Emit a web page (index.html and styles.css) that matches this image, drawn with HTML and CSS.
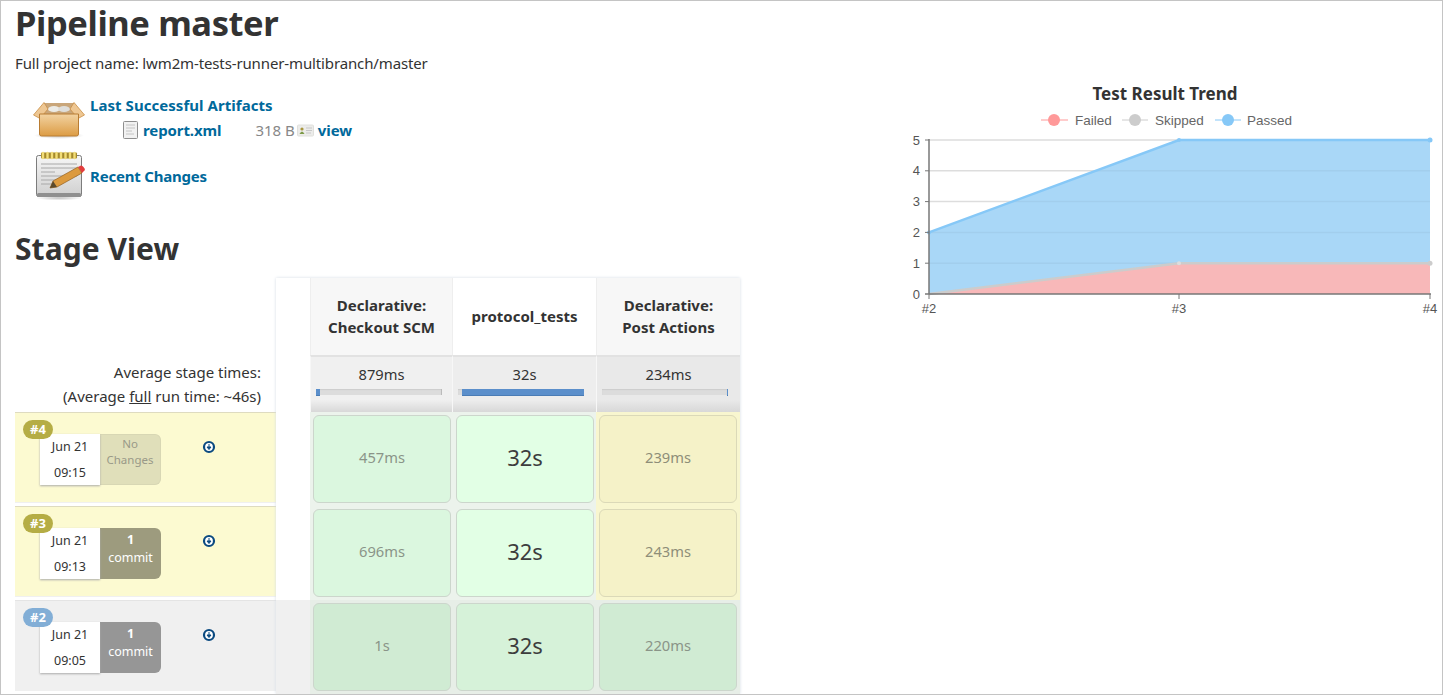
FILE: index.html
```html
<!DOCTYPE html>
<html lang="en">
<head>
    <meta charset="UTF-8">
    <title>Pipeline master</title>
    <link rel="stylesheet" href="styles.css">
</head>
<body>
<div class="frame">
    <div class="main">
        <h1>Pipeline master</h1>
        <p class="full-name">Full project name: lwm2m-tests-runner-multibranch/master</p>

        <div class="task">
            <svg class="task-icon" width="56" height="42" viewBox="0 0 56 42">
                <defs>
                    <linearGradient id="box" x1="0" y1="0" x2="0" y2="1">
                        <stop offset="0" stop-color="#f2d3a2"/>
                        <stop offset="1" stop-color="#dc9c44"/>
                    </linearGradient>
                    <radialGradient id="ground">
                        <stop offset="0" stop-color="#999" stop-opacity=".6"/>
                        <stop offset="1" stop-color="#999" stop-opacity="0"/>
                    </radialGradient>
                </defs>
                <ellipse cx="26" cy="38.500" rx="25" ry="3.500" fill="url(#ground)"/>
                <path d="M11 6 L41 6 L45 18 L7 18 Z" fill="#c9a67a"/>
                <ellipse cx="21" cy="12" rx="6" ry="3" fill="#ecebe6"/>
                <ellipse cx="31" cy="12" rx="6" ry="3" fill="#dfdeda"/>
                <path d="M11 5.500 L.5 18 L7 21.500 L15 12 Z" fill="#eec793" stroke="#c98e45" stroke-width=".8"/>
                <path d="M41 5.500 L51.500 18 L45 21.500 L37 12 Z" fill="#eec793" stroke="#c98e45" stroke-width=".8"/>
                <path d="M6.500 17 L45.500 17 L45.500 37 Q45.500 39 43.500 39 L8.500 39 Q6.500 39 6.500 37 Z" fill="url(#box)" stroke="#b97c32"/>
            </svg>
            <div class="task-body">
                <a class="task-link" href="#">Last Successful Artifacts</a>
                <div class="artifact">
                    <svg class="doc-icon" width="15" height="18" viewBox="0 0 15 18">
                        <rect x=".5" y=".5" width="14" height="17" rx="1" fill="#f1f1f1" stroke="#8e8e8e"/>
                        <path d="M3 4h9M3 7h9M3 10h6M3 13h8" stroke="#c4c4c4"/>
                    </svg>
                    <a class="artifact-name" href="#">report.xml</a>
                    <span class="artifact-size">318 B</span>
                    <svg class="view-icon" width="17" height="13" viewBox="0 0 17 13">
                        <rect x=".5" y="1" width="16" height="11" rx="1" fill="#ececea" stroke="#e0e0dc"/>
                        <circle cx="5" cy="5" r="1.600" fill="#a8963e"/>
                        <path d="M2.500 10 Q5 5 7.500 10 Z" fill="#7d9a48"/>
                        <path d="M9 4h6M9 6.500h6M9 9h5" stroke="#c8c8c8"/>
                    </svg>
                    <a class="artifact-name" href="#">view</a>
                </div>
            </div>
        </div>

        <div class="task task-changes">
            <svg class="task-icon" width="56" height="50" viewBox="0 0 56 50">
                <defs>
                    <linearGradient id="pad" x1="0" y1="0" x2="0" y2="1">
                        <stop offset="0" stop-color="#f6f6f6"/>
                        <stop offset="1" stop-color="#cfcfcf"/>
                    </linearGradient>
                </defs>
                <ellipse cx="26" cy="47" rx="23" ry="2.500" fill="url(#ground)"/>
                <rect x="3.500" y="4.500" width="45" height="41" rx="2" fill="url(#pad)" stroke="#7c7c7c"/>
                <rect x="4" y="42" width="44" height="4" rx="1.500" fill="#8f8f8f"/>
                <rect x="8" y="1.500" width="36" height="6" rx="1" fill="#a58a2b"/>
                <path d="M10 2v5M14.500 2v5M19 2v5M23.500 2v5M28 2v5M32.500 2v5M37 2v5M41.500 2v5" stroke="#f2dd78" stroke-width="2.400" stroke-linecap="round"/>
                <path d="M8 13h36M8 17h36M8 21h14M8 25h36M8 29h22M8 33h12" stroke="#a8a8a8"/>
                <path d="M17 37 L20 30 L45 16 L49 22 L24 36 Z" fill="#dc9a3e" stroke="#94601f" stroke-width=".7"/>
                <path d="M17 37 L20 30 L24 36 Z" fill="#5b4a2d"/>
                <path d="M45 16 L48 14.500 Q51 15 52 19 L49 22 Z" fill="#e33e3e"/>
            </svg>
            <a class="task-link" href="#">Recent Changes</a>
        </div>

        <h2>Stage View</h2>

        <div class="stage-view">
            <div class="avg-label">
                <div>Average stage times:</div>
                <div>(Average <u>full</u> run time: ~46s)</div>
            </div>

            <div class="blank-top"></div>
            <div class="stage-head alt">Declarative:<br>Checkout SCM</div>
            <div class="stage-head">protocol_tests</div>
            <div class="stage-head alt">Declarative:<br>Post Actions</div>

            <div class="avg avg-light">879ms
                <div class="bar"><div class="bar-fill" style="left:0;width:4px"></div></div>
            </div>
            <div class="avg">32s
                <div class="bar"><div class="bar-fill" style="left:4px;width:122px"></div></div>
            </div>
            <div class="avg avg-dark">234ms
                <div class="bar"><div class="bar-fill" style="left:125px;width:1px"></div></div>
            </div>

            <div class="run run-yellow">
                <span class="badge">#4</span>
                <div class="run-date"><span>Jun 21</span><span>09:15</span></div>
                <div class="run-changes none">No<br>Changes</div>
                <svg class="run-dl" width="14" height="14" viewBox="0 0 14 14"><circle cx="7" cy="7" r="5" fill="#fff" stroke="#0b4a80" stroke-width="2.200"/><path d="M7 4v3M5 7 L7 9.500 L9 7 Z" fill="#0b4a80" stroke="#0b4a80"/></svg>
            </div>
            <div class="blank"></div>
            <div class="col-wrap col-1 green"><div class="cell c-green dim">457ms</div></div>
            <div class="col-wrap col-2 green"><div class="cell c-bright big">32s</div></div>
            <div class="col-wrap col-3 yellow"><div class="cell c-yellow dim">239ms</div></div>

            <div class="run run-yellow">
                <span class="badge">#3</span>
                <div class="run-date"><span>Jun 21</span><span>09:13</span></div>
                <div class="run-changes olive"><b>1</b><br>commit</div>
                <svg class="run-dl" width="14" height="14" viewBox="0 0 14 14"><circle cx="7" cy="7" r="5" fill="#fff" stroke="#0b4a80" stroke-width="2.200"/><path d="M7 4v3M5 7 L7 9.500 L9 7 Z" fill="#0b4a80" stroke="#0b4a80"/></svg>
            </div>
            <div class="blank"></div>
            <div class="col-wrap col-1 green"><div class="cell c-green dim">696ms</div></div>
            <div class="col-wrap col-2 green"><div class="cell c-bright big">32s</div></div>
            <div class="col-wrap col-3 yellow"><div class="cell c-yellow dim">243ms</div></div>

            <div class="run run-grey">
                <span class="badge blue">#2</span>
                <div class="run-date"><span>Jun 21</span><span>09:05</span></div>
                <div class="run-changes grey"><b>1</b><br>commit</div>
                <svg class="run-dl" width="14" height="14" viewBox="0 0 14 14"><circle cx="7" cy="7" r="5" fill="#fff" stroke="#0b4a80" stroke-width="2.200"/><path d="M7 4v3M5 7 L7 9.500 L9 7 Z" fill="#0b4a80" stroke="#0b4a80"/></svg>
            </div>
            <div class="blank grey"></div>
            <div class="col-wrap col-1 dark"><div class="cell c-dark dim">1s</div></div>
            <div class="col-wrap col-2 dark"><div class="cell c-mid big">32s</div></div>
            <div class="col-wrap col-3 dark"><div class="cell c-dark dim">220ms</div></div>

            <div class="table-outline"></div>
        </div>
    </div>

    <div class="trend">
        <svg width="552" height="240" viewBox="0 0 552 240">
            <text class="chart-title" x="275" y="20" text-anchor="middle">Test Result Trend</text>

            <path class="legend-line" d="M151 40h27" stroke="#f99"/>
            <circle cx="164" cy="40" r="6" fill="#f99"/>
            <text class="legend" x="185" y="44.500">Failed</text>
            <path class="legend-line" d="M232 40h26" stroke="#ccc"/>
            <circle cx="245" cy="40" r="6" fill="#ccc"/>
            <text class="legend" x="265" y="44.500">Skipped</text>
            <path class="legend-line" d="M325 40h26" stroke="#86c8f7"/>
            <circle cx="338" cy="40" r="6" fill="#86c8f7"/>
            <text class="legend" x="357" y="44.500">Passed</text>

            <path d="M39 60H540M39 90.800H540M39 121.600H540M39 152.400H540M39 183.200H540" stroke="#ddd" stroke-width="1.500"/>

            <path d="M39 152.400 L289 60 L540 60 L540 183.200 L289 183.200 L39 214 Z" fill="#a9d7f7"/>
            <path d="M39 214 L289 183.200 L540 183.200 L540 214 Z" fill="#f8b8b9"/>
            <path d="M205.700 90.800H540M122 121.600H540M39 152.400H540M39 183.200H540" stroke="#000" stroke-opacity=".04" stroke-width="1.500"/>

            <path d="M39 214 L289 183.200 L540 183.200" fill="none" stroke="#ccc" stroke-width="2.500"/>
            <path d="M39 152.400 L289 60 L540 60" fill="none" stroke="#86c8f7" stroke-width="2.500"/>
            <circle cx="289" cy="60" r="2" fill="#86c8f7"/>
            <circle cx="540" cy="60" r="2.500" fill="#86c8f7"/>
            <circle cx="39" cy="152.400" r="2" fill="#86c8f7"/>
            <circle cx="289" cy="183.200" r="2" fill="#ddd"/>
            <circle cx="540" cy="183.200" r="2.500" fill="#ccc"/>

            <path d="M39 59V214" stroke="#777" stroke-width="1.500"/>
            <path d="M35 214H541" stroke="#777" stroke-width="1.500"/>
            <path d="M35 60h4M35 90.800h4M35 121.600h4M35 152.400h4M35 183.200h4M39 214v5M289 214v5M540 214v5" stroke="#777"/>

            <g class="tick">
                <text x="30" y="64.500" text-anchor="end">5</text>
                <text x="30" y="95.300" text-anchor="end">4</text>
                <text x="30" y="126.100" text-anchor="end">3</text>
                <text x="30" y="156.900" text-anchor="end">2</text>
                <text x="30" y="187.700" text-anchor="end">1</text>
                <text x="30" y="218.500" text-anchor="end">0</text>
                <text x="39" y="233" text-anchor="middle">#2</text>
                <text x="289" y="233" text-anchor="middle">#3</text>
                <text x="540" y="233" text-anchor="middle">#4</text>
            </g>
        </svg>
    </div>
</div>
</body>
</html>
```

FILE: styles.css
```css
html, body { margin: 0; padding: 0; background: #fff; }
body { font-family: "Noto Sans", "Open Sans", sans-serif; font-size: 15px; color: #333; }
a { color: #00699b; text-decoration: none; font-weight: bold; }

.frame { width: 1443px; height: 695px; box-sizing: border-box; border: 1px solid #c4c4c4; display: flex; overflow: hidden; }
.main { width: 875px; padding-left: 14px; flex-shrink: 0; }

h1 { margin: 0; font-size: 34.500px; line-height: 44px; font-weight: bold; letter-spacing: -.4px; color: #333; }
.full-name { margin: 8px 0 0; font-size: 15px; line-height: 20px; letter-spacing: -.13px; }

.task { display: flex; margin-top: 24px; margin-left: 18px; }
.task-icon { flex-shrink: 0; }
.task-body { margin-top: -2px; }
.task-link { font-size: 15px; line-height: 20px; letter-spacing: .05px; display: block; margin-left: 1px; }
.artifact { display: flex; align-items: center; margin: 5px 0 0 34px; height: 20px; font-size: 15px; }
.doc-icon { margin-right: 5px; }
.artifact-name { letter-spacing: -.1px; }
.artifact-size { color: #888; margin-left: 34px; margin-right: 2px; }
.view-icon { margin-right: 4px; }
.task-changes { margin-top: 11px; align-items: center; }
.task-changes .task-link { letter-spacing: -.2px; }

h2 { margin: 29px 0 0; font-size: 30px; line-height: 38px; font-weight: bold; letter-spacing: .05px; color: #333; }

.stage-view { position: relative; display: grid; grid-template-columns: 261px 34px 142px 144px 144px; grid-template-rows: 77px 57px 94px 94px 94px; width: 725px; margin-top: 10px; }
.avg-label { grid-column: 1; grid-row: 1 / 3; text-align: right; padding: 0 15px 4px 0; align-self: end; line-height: 24px; font-size: 15px; }
.blank-top { grid-column: 2; grid-row: 1 / 3; background: #fff; }
.table-outline { position: absolute; left: 261px; top: 0; width: 464px; height: 416px; box-shadow: 0 0 3px #d5dde5; pointer-events: none; }

.stage-head { display: flex; align-items: center; justify-content: center; text-align: center; font-weight: bold; font-size: 15px; line-height: 22px; padding-bottom: 1px; box-sizing: border-box; background: #fff; border-left: 1px solid #eee; }
.stage-head.alt { background: #f7f7f7; }

.avg { grid-row: 2; text-align: center; padding-top: 7px; line-height: 20px; font-size: 14.700px; border-top: 2px solid #e2e2e2; border-left: 1px solid #f7f7f7; box-sizing: border-box; background: linear-gradient(to bottom, #ededed 0, #ededed 78%, #d8d8d8 100%); }
.avg-light { background: linear-gradient(to bottom, #f0f0f0 0, #f0f0f0 78%, #d8d8d8 100%); }
.avg-dark { background: linear-gradient(to bottom, #e9e9e9 0, #e9e9e9 78%, #d8d8d8 100%); }
.bar { position: relative; width: 126px; height: 6px; margin: 5px 0 0 5px; box-sizing: border-box; background: #dcdcdc; border-right: 1px solid #bbb; box-shadow: inset 0 1px 1px #ccc; }
.bar-fill { position: absolute; top: 0; height: 6px; background: #5b8fcb; box-shadow: 0 1px 0 #4a7cb5; }

.run { grid-column: 1; position: relative; display: flex; padding: 21px 0 0 25px; height: 91px; box-sizing: border-box; border-top: 1px solid #dedbc0; border-bottom: 1px solid #f0f0f0; }
.run-yellow { background: #fcfad1; }
.run-grey { background: #f0f0f0; border-top-color: #e4e4e4; }
.badge { position: absolute; left: 8px; top: 7px; width: 30px; height: 19px; border-radius: 10px; background: #b5ad45; color: #fff; font-size: 13px; font-weight: bold; line-height: 19px; text-align: center; z-index: 2; }
.badge.blue { background: #82aed6; }
.run-date { width: 60px; height: 51px; background: #fff; box-shadow: 0 1px 2px #aaa; display: flex; flex-direction: column; justify-content: space-between; align-items: center; font-size: 12.500px; line-height: 25px; z-index: 1; }
.run-changes { width: 61px; height: 51px; box-sizing: border-box; border-radius: 0 6px 6px 0; text-align: center; font-size: 12.500px; line-height: 18px; padding-top: 3px; color: #fff; }
.run-changes.none { background: #e0dfba; color: #999988; border: 1px solid #d8d7b4; border-left: 0; font-size: 11.500px; line-height: 16px; padding-top: 1px; }
.run-changes.olive { background: #9d9b7e; }
.run-changes.grey { background: #969696; }
.run-dl { margin: 6px 0 0 41px; }

.blank { grid-column: 2; background: #fff; }
.blank.grey { background: #f0f0f0; }
.col-wrap { padding: 3px 0; box-sizing: border-box; height: 94px; }
.col-1 { padding-left: 3px; padding-right: 1px; }
.col-2 { padding-left: 4px; padding-right: 2px; }
.col-3 { padding-left: 3px; padding-right: 3px; }
.col-wrap.green { background: #ecf3ec; }
.col-wrap.yellow { background: #f8f6cf; }
.col-wrap.dark { background: #e7eee7; }
.cell { height: 88px; box-sizing: border-box; padding-bottom: 5px; border: 1px solid #ccd6cc; border-radius: 6px; display: flex; align-items: center; justify-content: center; }
.cell.dim { font-size: 14.700px; color: #8a9488; }
.cell.big { font-size: 22px; color: #3d3d3d; }
.c-green { background: #dbf7df; }
.c-bright { background: #e2ffe5; }
.c-yellow { background: #f5f2c8; border-color: #dbd9b8; }
.c-yellow.dim { color: #8e8e78; }
.c-dark { background: #d0ebd3; }
.c-mid { background: #d6f2d9; }

.trend { width: 552px; padding-top: 79px; flex-shrink: 0; }
.chart-title { font-family: "Noto Sans", sans-serif; font-weight: bold; font-size: 17px; fill: #333; }
.legend { font-family: "Liberation Sans", Arial, sans-serif; font-size: 13.500px; fill: #666; }
.legend-line { stroke-width: 1; fill: none; }
.tick text { font-family: "Liberation Sans", Arial, sans-serif; font-size: 13px; fill: #555; }
```
